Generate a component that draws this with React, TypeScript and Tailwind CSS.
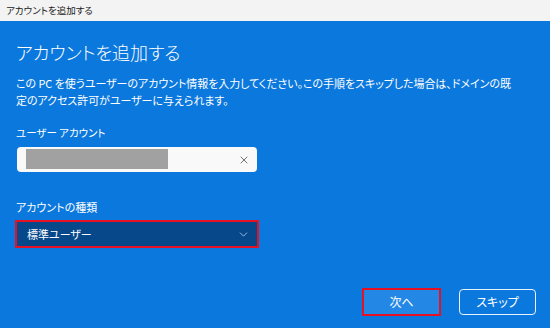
import { X, ChevronDown } from 'lucide-react'

const jp = { fontFamily: '"Noto Sans CJK JP", "Noto Sans", sans-serif', fontFeatureSettings: '"palt"' }

export default function App() {
  return (
    <div className="w-[550px] h-[328px] flex flex-col overflow-hidden" style={jp}>
      <div className="h-[21px] bg-[#f3f3f3] flex items-center px-[6px] text-[9.5px] leading-none text-[#1a1a1a]">
        アカウントを追加する
      </div>

      <div className="flex-1 bg-[#0b78dd] text-white flex flex-col px-[16px]">
        <h1 className="mt-[18px] text-[18px] leading-[26px] font-light">アカウントを追加する</h1>
        <p className="mt-[10px] text-[11px] leading-[17px] tracking-[-0.05px] whitespace-nowrap">
          この PC を使うユーザーのアカウント情報を入力してください。この手順をスキップした場合は、ドメインの既
          <br />
          定のアクセス許可がユーザーに与えられます。
        </p>

        <label className="mt-[16px] text-[10.5px] leading-[16px]">ユーザー アカウント</label>
        <div className="mt-[6px] ml-px w-[240px] h-[25px] rounded-[4px] bg-[#f9f9f9] flex items-center pl-[9px] pr-[7px]">
          <div className="w-[142px] h-[20px] -mt-px bg-[#a1a1a1]" />
          <X size={12} strokeWidth={1.5} className="ml-auto text-[#444]" />
        </div>

        <label className="mt-[27px] text-[11px] leading-[16px]">アカウントの種類</label>
        <div className="mt-[5px] -ml-px w-[244px] h-[28px] border-[2px] border-[#e81123] bg-[#06488a] flex items-center pl-[10px] pr-[7px]">
          <span className="text-[11px] leading-none">標準ユーザー</span>
          <ChevronDown size={13} strokeWidth={1.5} className="ml-auto text-[#b9d4ee]" />
        </div>

        <div className="mt-auto mb-[12px] flex justify-end gap-[18px]">
          <button className="w-[79px] h-[28px] border-[2px] border-[#e81123] bg-[#2387e6] text-[12px] leading-none">
            次へ
          </button>
          <button className="w-[77px] h-[26px] mt-px rounded-[4px] border border-white/90 text-[12px] leading-none mr-[-2px]">
            スキップ
          </button>
        </div>
      </div>
    </div>
  )
}
